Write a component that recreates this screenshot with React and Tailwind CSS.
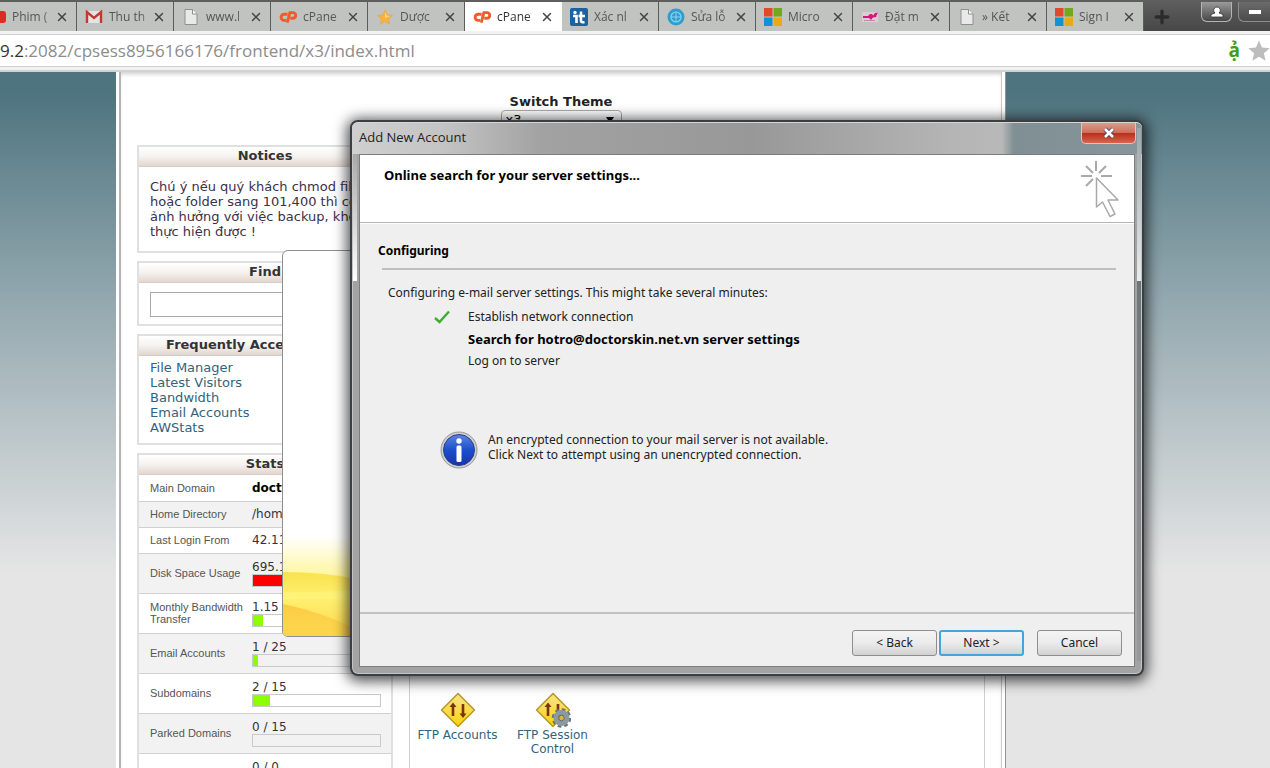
import { X, Plus } from 'lucide-react'

const FileIcon = () => (
  <svg viewBox="0 0 18 18" className="size-full">
    <path d="M3 1.5h7.5L15 6v10.5H3z" fill="#e9e9e9" stroke="#8f8f8f" />
    <path d="M10.5 1.5V6H15" fill="#fff" stroke="#8f8f8f" />
  </svg>
)

const GmailIcon = () => (
  <svg viewBox="0 0 18 18" className="size-full">
    <path d="M1 3h16v12H1z" fill="#e4e4e4" />
    <path d="M2 15V4l7 6 7-6v11" fill="none" stroke="#c5372c" strokeWidth="2.4" />
  </svg>
)

const CpanelIcon = () => (
  <svg viewBox="0 0 18 18" className="size-full" fill="none" stroke="#f15a29" strokeWidth="2.9">
    <path d="M8.6 6.200H5.200a3.100 3.100 0 0 0 0 6.200h1.900" />
    <path d="M8.200 14.600l2.700-10h3a2.800 2.800 0 0 1 0 5.700h-2.600" />
  </svg>
)

const StarIcon = () => (
  <svg viewBox="0 0 18 18" className="size-full">
    <path d="M9 2l2.2 4.8 5.3.6-4 3.6 1.2 5.3L9 13.6l-4.7 2.7L5.5 11l-4-3.6 5.3-.6z" fill="#f7b13c" stroke="#e9a13a" strokeWidth=".6" />
    <path d="M9 3.5l1.700 4 4 .5-5.700 2z" fill="#fbd67c" />
  </svg>
)

const ItIcon = () => (
  <svg viewBox="0 0 18 18" className="size-full">
    <rect width="18" height="18" rx="2" fill="#1c62a0" />
    <path d="M3 8h3.5v7M11 3.5v9.5q0 1.5 3.5 1.2M8.5 8H15" fill="none" stroke="#fff" strokeWidth="2.6" />
    <circle cx="5" cy="4.5" r="1.7" fill="#fff" />
  </svg>
)

const CompassIcon = () => (
  <svg viewBox="0 0 18 18" className="size-full">
    <circle cx="9" cy="9" r="8.5" fill="#2a9fd0" />
    <circle cx="9" cy="9" r="5" fill="none" stroke="#8fd3ee" strokeWidth="1.2" />
    <path d="M9 4v10M4 9h10" stroke="#8fd3ee" />
  </svg>
)

const MicrosoftIcon = () => (
  <svg viewBox="0 0 18 18" className="size-full">
    <path d="M0 0h8.5v8.5H0z" fill="#e0492b" />
    <path d="M9.5 0H18v8.5H9.5z" fill="#72a81c" />
    <path d="M0 9.5h8.5V18H0z" fill="#0e93d6" />
    <path d="M9.5 9.5H18V18H9.5z" fill="#e8ab14" />
  </svg>
)

const PinkIcon = () => (
  <svg viewBox="0 0 18 18" className="size-full">
    <path d="M1 4h16v10H1z" fill="#dccdd5" />
    <path d="M2 8h5l2-2h2l1 1.500L14 5l3-.5-2 4 1 .5-4 .5-2 2.500-2-2H2z" fill="#d8177c" />
    <path d="M3 12.500h11" stroke="#c68aa8" />
  </svg>
)

const VideoIcon = () => (
  <svg viewBox="0 0 18 18" className="size-full">
    <rect y="3" width="18" height="12" rx="3" fill="#e12a23" />
  </svg>
)

const tabs = [
  { icon: GmailIcon, title: 'Thu th' },
  { icon: FileIcon, title: 'www.l' },
  { icon: CpanelIcon, title: 'cPane' },
  { icon: StarIcon, title: 'Dược' },
  { icon: CpanelIcon, title: 'cPane', active: true },
  { icon: ItIcon, title: 'Xác nl' },
  { icon: CompassIcon, title: 'Sửa lỗ' },
  { icon: MicrosoftIcon, title: 'Micro' },
  { icon: PinkIcon, title: 'Đặt m' },
  { icon: FileIcon, title: '» Kết' },
  { icon: MicrosoftIcon, title: 'Sign I' },
]

const links = ['File Manager', 'Latest Visitors', 'Bandwidth', 'Email Accounts', 'AWStats']

const stats = [
  { label: 'Main Domain', value: 'doctorskin', bold: true },
  { label: 'Home Directory', value: '/home' },
  { label: 'Last Login From', value: '42.117' },
  { label: 'Disk Space Usage', value: '695.1', percent: 100, color: '#ff0000' },
  { label: 'Monthly Bandwidth Transfer', value: '1.15', percent: 8, color: '#8cff00' },
  { label: 'Email Accounts', value: '1 / 25', percent: 4, color: '#8cff00' },
  { label: 'Subdomains', value: '2 / 15', percent: 13, color: '#8cff00' },
  { label: 'Parked Domains', value: '0 / 15', percent: 0, color: '#8cff00' },
  { label: 'Addon Domains', value: '0 / 0', percent: 0, color: '#8cff00' },
]

const tabTitle = "flex-1 whitespace-nowrap text-xs [mask-image:linear-gradient(to_right,black_70%,rgba(0,0,0,0.3))]"

function Tab({ icon: Icon, title, active }) {
  return (
    <div className={`flex w-[97px] shrink-0 items-center border-r pl-2 pr-[7px] ${active ? 'border-white bg-white' : 'border-[#5c5c5c] bg-[#c1c3c0]'}`}>
      <span className="mr-1.5 size-[18px] shrink-0"><Icon /></span>
      <span className={`${tabTitle} ${active ? 'text-[#333]' : 'text-[#555]'}`}>{title}</span>
      <button aria-label="Close tab" className="text-[#444]"><X size={14} strokeWidth={2.5} /></button>
    </div>
  )
}

function Browser() {
  return (
    <header className="shrink-0 font-['Open_Sans',sans-serif]">
      <div className="flex h-[31px] bg-linear-to-b from-[#5f5f5f] to-[#474747] pt-0.5">
        <div className="flex w-[77px] shrink-0 items-center border-r border-[#5c5c5c] bg-[#c1c3c0] pr-[7px]">
          <span className="-ml-3 mr-1.5 size-[18px] shrink-0"><VideoIcon /></span>
          <span className={`${tabTitle} text-[#555]`}>Phim (</span>
          <button aria-label="Close tab" className="text-[#444]"><X size={14} strokeWidth={2.5} /></button>
        </div>
        {tabs.map((tab, i) => <Tab key={i} {...tab} />)}
        <button aria-label="New tab" className="ml-2 text-[#2c2c2c]"><Plus size={20} strokeWidth={4} /></button>
        <div className="ml-auto flex shrink-0 gap-1.5">
          <button aria-label="User" className="flex h-5 w-[31px] items-center justify-center rounded-b-md border border-t-0 border-[#b5b5b5] bg-linear-to-b from-[#9b9b9b] to-[#484848]">
            <svg viewBox="0 0 14 12" className="h-3 w-3.5" fill="#fff" stroke="#333" strokeWidth=".8">
              <path d="M1 11V8.5l4-1.5a3.3 3.3 0 1 1 4 0l4 1.5V11z" />
            </svg>
          </button>
          <button aria-label="Minimize" className="flex h-5 w-8 items-center justify-center rounded-bl-md border border-r-0 border-t-0 border-[#8d8d8d] bg-linear-to-b from-[#6b6b6b] to-[#4b4b4b]">
            <span className="h-1 w-3 bg-white" />
          </button>
        </div>
      </div>
      <div className="flex h-[41px] items-center border-b-2 border-[#d2d2d2] bg-[#f2f2f2] py-[3px]">
        <div className="flex h-full w-full items-center border-y border-[#cfcfcf] bg-white text-[17px]">
          <label htmlFor="url" className="text-[#333]">9.2</label>
          <input id="url" readOnly defaultValue=":2082/cpsess8956166176/frontend/x3/index.html" className="min-w-0 flex-1 bg-transparent text-[#8c8c8c] outline-none" />
          <span className="mr-2 text-[19px] font-bold text-[#3f9f0c]">ạ̉</span>
          <svg viewBox="0 0 22 22" className="size-[22px] shrink-0" fill="#bdbdbd">
            <path d="M11 .5l3 7 7.7.7-5.8 5 1.700 7.500-6.600-4-6.600 4 1.700-7.500-5.800-5L8 7.500z" />
          </svg>
        </div>
      </div>
    </header>
  )
}

function Panel({ title, children }) {
  return (
    <section className="mb-2 border-2 border-[#e0e0e0] bg-white">
      <h2 className="h-5 whitespace-nowrap border-b border-[#d3cdca] bg-linear-to-b from-white via-[#f6f2ef] to-[#e2d6cf] text-center text-[13px] font-bold leading-[17px] text-[#333]">{title}</h2>
      {children}
    </section>
  )
}

function Sidebar() {
  return (
    <aside className="w-[256px] shrink-0">
      <Panel title="Notices">
        <p className="whitespace-nowrap px-[11px] pb-3 pt-3 text-[13px] leading-[15px] text-[#3c3048]">
          Chú ý nếu quý khách chmod file<br />
          hoặc folder sang 101,400 thì có<br />
          ảnh hưởng với việc backup, không<br />
          thực hiện được !
        </p>
      </Panel>
      <Panel title="Find">
        <div className="px-[11px] pb-[7px] pt-[9px]">
          <input aria-label="Find" className="block h-[25px] w-full border border-[#a9a9a9] bg-white px-1 text-[13px]" />
        </div>
      </Panel>
      <Panel title="Frequently Accessed Areas">
        <ul className="px-[11px] pb-2 pt-1 text-[13px] leading-[15px]">
          {links.map(link => (
            <li key={link}><a href="#" className="text-[#33637c]">{link}</a></li>
          ))}
        </ul>
      </Panel>
      <Panel title="Stats">
        <table className="w-full table-fixed border-collapse">
          <tbody>
            {stats.map(({ label, value, bold, percent, color }) => (
              <tr key={label} className={`border-b border-[#d0d0d0] even:bg-[#f2f2f2] ${percent === undefined ? 'h-[26px]' : 'h-10'}`}>
                <th scope="row" className="w-[113px] pl-[11px] pr-2 text-left font-['Liberation_Sans',Arial,sans-serif] text-[11px] font-normal leading-3 text-[#555]">{label}</th>
                <td className="pr-2.5 text-xs leading-[14px] text-[#333]">
                  <div className={bold ? 'font-bold text-black' : ''}>{value}</div>
                  {percent !== undefined && (
                    <div className="h-[13px] border border-[#c9c9c9]">
                      <div className="h-full" style={{ width: `${percent}%`, backgroundColor: color }} />
                    </div>
                  )}
                </td>
              </tr>
            ))}
          </tbody>
        </table>
      </Panel>
    </aside>
  )
}

function FtpIcon({ gear }) {
  return (
    <svg viewBox="0 0 36 36" className="size-9">
      <defs>
        <linearGradient id="sign" x1="0" y1="0" x2="0" y2="1">
          <stop offset="0" stopColor="#f6e58a" />
          <stop offset="1" stopColor="#fbd208" />
        </linearGradient>
      </defs>
      <path d="M18 1.5L34.5 18 18 34.5 1.5 18z" fill="url(#sign)" stroke="#b7962c" strokeWidth="1.5" strokeLinejoin="round" />
      <path d="M13 24V14M23 12v10" stroke="#7a3413" strokeWidth="2.6" />
      <path d="M9.5 15L13 10.5l3.5 4.5zM19.5 21.5L23 26l3.5-4.5z" fill="#7a3413" />
      {gear && (
        <g>
          <circle cx="26.5" cy="26" r="8" fill="none" stroke="#69747b" strokeWidth="3.500" strokeDasharray="3.500 2.780" />
          <circle cx="26.5" cy="26" r="5.5" fill="none" stroke="#8b99a1" strokeWidth="5" />
          <circle cx="26.5" cy="26" r="2.8" fill="#d6b93a" stroke="#59636a" />
        </g>
      )}
    </svg>
  )
}

function InfoIcon() {
  return (
    <svg viewBox="0 0 38 38" className="size-[38px] shrink-0">
      <defs>
        <linearGradient id="info" x1="0" y1="0" x2="0" y2="1">
          <stop offset="0" stopColor="#5c86df" />
          <stop offset=".5" stopColor="#1c4fcb" />
          <stop offset="1" stopColor="#1733a8" />
        </linearGradient>
      </defs>
      <circle cx="19" cy="19" r="18" fill="#cfcfcf" stroke="#999" />
      <circle cx="19" cy="19" r="15.5" fill="url(#info)" stroke="#2a3f8c" />
      <circle cx="19" cy="10" r="2.7" fill="#fff" />
      <rect x="16.5" y="14.5" width="5" height="16.5" rx="1.5" fill="#fff" />
    </svg>
  )
}

function Splash() {
  return (
    <div className="absolute left-[282px] top-[250px] h-[387px] w-[300px] overflow-hidden rounded-md border border-[#8f8f8f] bg-white">
      <svg viewBox="0 0 300 100" preserveAspectRatio="none" className="absolute bottom-0 left-0 h-[100px] w-full">
        <defs>
          <linearGradient id="glow" x1="0" y1="0" x2="0" y2="1">
            <stop offset="0" stopColor="#fff" />
            <stop offset=".36" stopColor="#fff7a8" />
            <stop offset="1" stopColor="#ffe95a" />
          </linearGradient>
          <linearGradient id="band" x1="0" y1="0" x2="0" y2="1">
            <stop offset="0" stopColor="#f9e24e" />
            <stop offset=".4" stopColor="#fff070" />
            <stop offset="1" stopColor="#fdd84e" />
          </linearGradient>
          <linearGradient id="swoosh" x1="0" y1="0" x2="0" y2="1">
            <stop offset="0" stopColor="#fcc53c" stopOpacity=".9" />
            <stop offset="1" stopColor="#fcc53c" stopOpacity=".2" />
          </linearGradient>
        </defs>
        <path d="M0 0h300v100H0z" fill="url(#glow)" />
        <path d="M0 36q40 0 75 7 100 10 225 10v47H0z" fill="url(#band)" />
        <path d="M0 68q40 8 80 28v4H0z" fill="url(#swoosh)" />
        <path d="M0 56q40 0 80-2v12q-40-6-80-2z" fill="#fff680" opacity=".5" />
      </svg>
    </div>
  )
}

const dialogButton = "h-[26px] w-[85px] rounded-[3px] bg-linear-to-b from-[#f4f4f4] via-[#ebebeb] to-[#d2d2d2] text-center"

function AccountDialog() {
  return (
    <div role="dialog" aria-label="Add New Account" className="absolute left-[350px] top-[120px] flex h-[556px] w-[794px] flex-col rounded-lg border-2 border-[#3b3f41] bg-[#a3a3a3] px-[7px] pb-[7px] font-['Noto_Sans',sans-serif] text-xs text-[#222] shadow-[0_2px_14px_3px_rgba(0,0,0,0.7),inset_0_0_0_1px_#c4c4c4]">
      <div className="-mx-[7px] flex h-8 shrink-0 items-start justify-between rounded-t-md border-t border-[#d5d5d5] bg-[linear-gradient(to_right,#cfcfcf_0,#c4c4c4_90px,#a2a2a2_190px,#989898_400px,#b5b5b5_600px,#b8b8b8_650px,#7f8f93_662px,#87969a_100%)] pl-[7px] pr-1.5">
        <h1 className="pt-[5px] font-['Open_Sans',sans-serif] text-[13px] leading-[18px] text-[#222]">Add New Account</h1>
        <button aria-label="Close" className="flex h-[21px] w-[55px] items-center justify-center rounded-b-[5px] border border-t-0 border-[#e6c5bf] bg-[linear-gradient(to_bottom,#dd9a8d_0,#cf6f5c_48%,#b9301a_52%,#d9644c_100%)]">
          <svg viewBox="0 0 14 12" className="h-3 w-3.5">
            <path d="M3 2l8 8M11 2l-8 8" stroke="#4a4a5a" strokeWidth="4.5" />
            <path d="M3 2l8 8M11 2l-8 8" stroke="#fff" strokeWidth="2.6" />
          </svg>
        </button>
      </div>
      {/* glass reflections down both sides */}
      <span className="absolute left-px top-6 h-[135px] w-1 bg-linear-to-b from-transparent to-white" />
      <span className="absolute right-px top-1.5 h-[153px] w-1 bg-linear-to-b from-[#9aa7ab] to-[#e9eded]" />
      <span className="absolute right-px top-[159px] h-[380px] w-1 bg-linear-to-b from-[#6d777a] to-[#999]" />
      <div className="flex min-h-0 flex-1 flex-col border border-[#7d7d7d] bg-[#efefef]">
        <div className="flex h-[68px] shrink-0 justify-between border-b border-[#b5b5b5] bg-white pl-6 pr-3.5 pt-1.5">
          <h2 className="pt-1.5 text-[13px] font-bold leading-4 text-black">Online search for your server settings...</h2>
          <svg viewBox="0 0 40 58" className="h-[58px] w-10" fill="none" stroke="#a9a9a9" strokeWidth="2">
            <path d="M16 0v10M1 15h11M21 15h11M6 5l7 7M26 5l-7 7M6 25l7-7" />
            <path d="M16.5 17v29l6-5 7.5 14.500 5-2.500-7-14h10z" strokeWidth="1.500" strokeLinejoin="round" />
          </svg>
        </div>
        <div className="flex-1 border-t border-white px-[18px] pt-[19px]">
          <h3 className="font-bold leading-4 text-black">Configuring</h3>
          <hr className="ml-1 mt-[9px] border-t-2 border-[#bfbfbf]" />
          <p className="ml-2.5 mt-[15px] leading-4">Configuring e-mail server settings. This might take several minutes:</p>
          <ul className="ml-[90px] mt-[5px] leading-[22px]">
            <li className="relative">
              <svg viewBox="0 0 16 14" className="absolute -left-[34px] top-1 h-3.5 w-4" fill="none" stroke="#3fae29" strokeWidth="2.4">
                <path d="M1 8l4.5 4L15 1.5" />
              </svg>
              Establish network connection
            </li>
            <li className="text-[13px] font-bold text-black">Search for hotro@doctorskin.net.vn server settings</li>
            <li>Log on to server</li>
          </ul>
          <div className="ml-[62px] mt-[59px] flex gap-2.5">
            <InfoIcon />
            <p className="pt-px leading-[15px]">
              An encrypted connection to your mail server is not available.<br />
              Click Next to attempt using an unencrypted connection.
            </p>
          </div>
        </div>
        <div className="flex h-[54px] shrink-0 items-center justify-end border-t-2 border-[#c2c2c2] pr-3 pt-1.5">
          <button className={`${dialogButton} mr-0.5 border border-[#8e8e8e]`}>&lt; Back</button>
          <button className={`${dialogButton} mr-[13px] border-2 border-[#45a5d8]`}>Next &gt;</button>
          <button className={`${dialogButton} border border-[#8e8e8e]`}>Cancel</button>
        </div>
      </div>
    </div>
  )
}

export default function App() {
  return (
    <div className="relative flex h-screen flex-col overflow-hidden bg-[#e5e5e5] font-['DejaVu_Sans',Verdana,sans-serif]">
      <Browser />
      <main className="min-h-0 flex-1 overflow-hidden bg-[linear-gradient(to_bottom,#4e7480_0,#4e7480_20px,#93a8af_228px,#e5e5e5_500px)]">
        <div className="ml-[116px] mr-[265px] h-full border-x-[3px] border-white bg-white shadow-[1px_0_0_#8f9698]">
          <div className="h-full border-l-2 border-r border-l-[#b4b4b4] border-r-[#cfc8c4] px-4 shadow-[inset_0_4px_4px_-2px_rgba(0,0,0,0.2)]">
            <div className="flex h-[73px] flex-col items-center pt-[22px]">
              <label htmlFor="theme" className="text-[13px] font-bold leading-4 text-[#222]">Switch Theme</label>
              <div className="relative w-[121px]">
                <select id="theme" className="block h-5 w-full appearance-none rounded-sm border border-[#a9a9a9] bg-white px-1 text-[13px] leading-[18px] text-black">
                  <option>x3</option>
                </select>
                <svg viewBox="0 0 8 6" className="pointer-events-none absolute right-2 top-[7px] h-1.5 w-2">
                  <path d="M0 0h8L4 6z" />
                </svg>
              </div>
            </div>
            <div className="flex gap-4">
              <Sidebar />
              <section className="flex h-[640px] flex-1 items-start border-x border-[#cfcfcf] pt-[547px]">
                <a href="#" className="flex w-[95px] flex-col items-center text-center text-xs leading-[14px] text-[#33637c]">
                  <FtpIcon />
                  FTP Accounts
                </a>
                <a href="#" className="flex w-[95px] flex-col items-center text-center text-xs leading-[14px] text-[#33637c]">
                  <FtpIcon gear />
                  FTP Session Control
                </a>
              </section>
            </div>
          </div>
        </div>
      </main>
      <Splash />
      <AccountDialog />
    </div>
  )
}
